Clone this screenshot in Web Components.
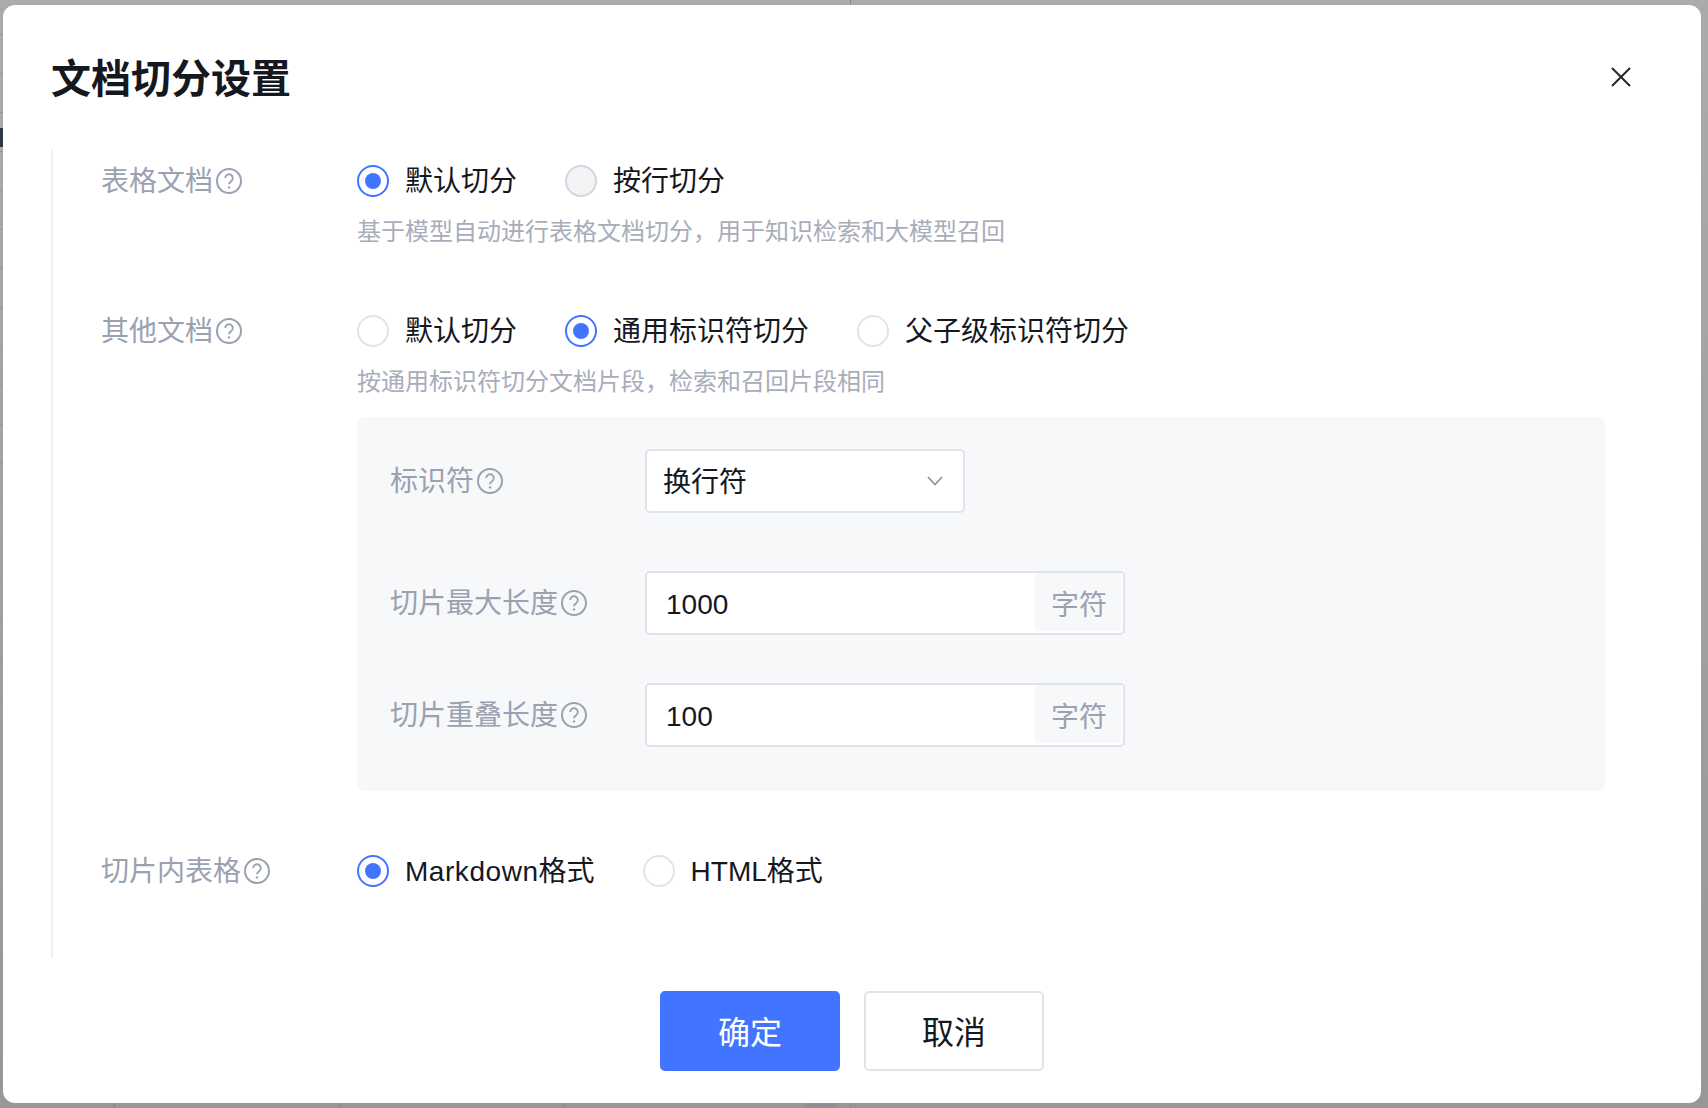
<!DOCTYPE html>
<html lang="zh">
<head>
<meta charset="utf-8">
<title>文档切分设置</title>
<style>
html, body { margin: 0; padding: 0; }
body {
  font-family: "Liberation Sans", "Noto Sans CJK SC", sans-serif;
  color: #15181f;
}
</style>
</head>
<body>
<split-page>
  <split-modal heading="文档切分设置">
    <form-row label="表格文档">
      <radio-group>
        <radio-item checked>默认切分</radio-item>
        <radio-item disabled>按行切分</radio-item>
      </radio-group>
      <form-hint>基于模型自动进行表格文档切分，用于知识检索和大模型召回</form-hint>
    </form-row>
    <form-row label="其他文档" style="margin-top:63px">
      <radio-group>
        <radio-item>默认切分</radio-item>
        <radio-item checked>通用标识符切分</radio-item>
        <radio-item>父子级标识符切分</radio-item>
      </radio-group>
      <form-hint>按通用标识符切分文档片段，检索和召回片段相同</form-hint>
      <sub-panel>
        <form-row label="标识符" compact>
          <select-box value="换行符"></select-box>
        </form-row>
        <form-row label="切片最大长度" compact style="margin-top:58px">
          <addon-input value="1000" addon="字符"></addon-input>
        </form-row>
        <form-row label="切片重叠长度" compact style="margin-top:48px">
          <addon-input value="100" addon="字符"></addon-input>
        </form-row>
      </sub-panel>
    </form-row>
    <form-row label="切片内表格" style="margin-top:60px">
      <radio-group>
        <radio-item checked><span style="letter-spacing:.55px">Markdown</span>格式</radio-item>
        <radio-item>HTML格式</radio-item>
      </radio-group>
    </form-row>
    <action-button slot="footer" primary>确定</action-button>
    <action-button slot="footer">取消</action-button>
  </split-modal>
</split-page>

<script>
class SplitPage extends HTMLElement {
  constructor() {
    super();
    this.attachShadow({mode: 'open'});
    this.shadowRoot.innerHTML = `
<style>
:host {
  display: block;
  width: 1708px;
  height: 1108px;
  box-sizing: border-box;
  padding: 5px 7px 5px 3px;
  overflow: hidden;
  background-color: #a3a3a4;
  background-image:
    linear-gradient(#2f3643, #2f3643),
    repeating-linear-gradient(to bottom, transparent 0 38px, #979799 38px 39px),
    linear-gradient(#8f8f94, #8f8f94),
    linear-gradient(#8a8a8c, #8a8a8c),
    linear-gradient(#8a8a8c, #8a8a8c),
    repeating-linear-gradient(to right, transparent 0 224px, #858587 224px 225px),
    linear-gradient(#ababac, #979797);
  background-size: 3px 19px, 3px 100%, 32px 6px, 1px 6px, 1px 5px, 676px 6px, 100% 100%;
  background-position: 0 128px, 0 -4px, 805px 100%, 850px 100%, 850px 0, -110px 100%, 0 0;
  background-repeat: no-repeat;
}
</style>
<slot></slot>`;
  }
}

class SplitModal extends HTMLElement {
  constructor() {
    super();
    this.attachShadow({mode: 'open'});
    this.shadowRoot.innerHTML = `
<style>
:host {
  display: block;
  height: 1098px;
  box-sizing: border-box;
  background: #fff;
  border-radius: 12px;
  padding: 0 96px 32px 48px;
}
.header {
  display: flex;
  justify-content: space-between;
  align-items: center;
  height: 144px;
  box-sizing: border-box;
  padding: 46px 0 42px;
  margin-right: -26px;
}
.title {
  font-size: 40px;
  line-height: 56px;
  font-weight: 600;
  color: #15181f;
}
.close { display: block; width: 20px; height: 20px; margin-top: -4px; }
.body {
  height: 809px;
  box-sizing: border-box;
  border-left: 2px solid #eef0f4;
  padding: 12px 0 0 48px;
}
.footer {
  display: flex;
  justify-content: center;
  gap: 24px;
  margin: 33px -48px 0 0;
}
</style>
<div class="header">
  <div class="title"></div>
  <svg class="close" viewBox="0 0 20 20" fill="none" stroke="#23262d" stroke-width="2"><path d="M1 1l18 18M19 1L1 19"/></svg>
</div>
<div class="body"><slot></slot></div>
<div class="footer"><slot name="footer"></slot></div>`;
  }

  connectedCallback() {
    this.shadowRoot.querySelector('.title').textContent = this.getAttribute('heading');
  }
}

class HelpIcon extends HTMLElement {
  constructor() {
    super();
    this.attachShadow({mode: 'open'});
    this.shadowRoot.innerHTML = `
<style>
:host { display: block; width: 26px; height: 26px; flex: none; }
svg { display: block; }
</style>
<svg width="26" height="26" viewBox="0 0 26 26" fill="none" stroke="#9aa1b1" stroke-width="2">
  <circle cx="13" cy="13" r="12"/>
  <path d="M9.2 10a3.8 3.8 0 1 1 5.9 3.2c-1.3.9-2.1 1.5-2.1 3.1" stroke-width="1.9"/>
  <circle cx="13" cy="19.4" r="1.2" fill="#9aa1b1" stroke="none"/>
</svg>`;
  }
}

class FormRow extends HTMLElement {
  constructor() {
    super();
    this.attachShadow({mode: 'open'});
    this.shadowRoot.innerHTML = `
<style>
:host { display: flex; align-items: flex-start; }
.label {
  display: flex;
  align-items: center;
  gap: 3px;
  flex: none;
  width: 256px;
  height: 40px;
  font-size: 28px;
  color: #9aa1b1;
}
.label span { line-height: 40px; padding-top: 2px; }
:host([compact]) .label { width: 255px; height: 64px; }
.content { flex: 1; min-width: 0; }
</style>
<div class="label"><span></span><help-icon></help-icon></div>
<div class="content"><slot></slot></div>`;
  }

  connectedCallback() {
    this.shadowRoot.querySelector('.label span').textContent = this.getAttribute('label');
  }
}

class RadioGroup extends HTMLElement {
  constructor() {
    super();
    this.attachShadow({mode: 'open'});
    this.shadowRoot.innerHTML = `
<style>
:host { display: flex; gap: 48px; height: 40px; align-items: center; }
</style>
<slot></slot>`;
  }
}

class RadioItem extends HTMLElement {
  constructor() {
    super();
    this.attachShadow({mode: 'open'});
    this.shadowRoot.innerHTML = `
<style>
:host { display: flex; align-items: center; gap: 16px; font-size: 28px; line-height: 40px; color: #15181f; }
.dot {
  width: 32px;
  height: 32px;
  box-sizing: border-box;
  border: 2px solid #e1e3ea;
  border-radius: 50%;
  background: #fff;
  display: flex;
  align-items: center;
  justify-content: center;
  flex: none;
}
.text { padding-top: 2px; }
:host([checked]) .dot { border-color: #4175ff; }
:host([checked]) .dot::after {
  content: '';
  width: 16px;
  height: 16px;
  border-radius: 50%;
  background: #4175ff;
}
:host([disabled]) .dot { border-color: #d2d5dd; background: #f3f4f6; }
</style>
<span class="dot"></span><span class="text"><slot></slot></span>`;
  }
}

class FormHint extends HTMLElement {
  constructor() {
    super();
    this.attachShadow({mode: 'open'});
    this.shadowRoot.innerHTML = `
<style>
:host { display: block; margin-top: 15px; font-size: 24px; line-height: 32px; color: #a8adba; }
</style>
<slot></slot>`;
  }
}

class SubPanel extends HTMLElement {
  constructor() {
    super();
    this.attachShadow({mode: 'open'});
    this.shadowRoot.innerHTML = `
<style>
:host {
  display: block;
  height: 374px;
  box-sizing: border-box;
  margin-top: 19px;
  padding: 32px 33px 44px;
  background: #f7f8fa;
  border-radius: 8px;
}
</style>
<slot></slot>`;
  }
}

class SelectBox extends HTMLElement {
  constructor() {
    super();
    this.attachShadow({mode: 'open'});
    this.shadowRoot.innerHTML = `
<style>
:host {
  display: flex;
  align-items: center;
  justify-content: space-between;
  width: 320px;
  height: 64px;
  box-sizing: border-box;
  padding: 0 20px 0 16px;
  border: 2px solid #e1e3ea;
  border-radius: 5px;
  background: #fff;
  font-size: 28px;
  color: #15181f;
}
.value { padding-bottom: 2px; }
svg { display: block; }
</style>
<span class="value"></span>
<svg width="16" height="10" viewBox="0 0 16 10" fill="none" stroke="#8d93a1" stroke-width="1.8"><path d="M1 1l7 7.5L15 1"/></svg>`;
  }

  connectedCallback() {
    this.shadowRoot.querySelector('.value').textContent = this.getAttribute('value');
  }
}

class AddonInput extends HTMLElement {
  constructor() {
    super();
    this.attachShadow({mode: 'open'});
    this.shadowRoot.innerHTML = `
<style>
:host {
  display: flex;
  align-items: stretch;
  width: 480px;
  height: 64px;
  box-sizing: border-box;
  padding: 0 2px 2px 0;
  border: 2px solid #e1e3ea;
  border-radius: 5px;
  background: #fff;
  font-size: 28px;
}
.value { flex: 1; padding-left: 19px; line-height: 64px; color: #15181f; }
.addon {
  display: flex;
  align-items: center;
  padding: 2px 14px 0 16px;
  background: #f7f8fa;
  border-radius: 4px;
  color: #9aa1b1;
}
</style>
<span class="value"></span><span class="addon"></span>`;
  }

  connectedCallback() {
    this.shadowRoot.querySelector('.value').textContent = this.getAttribute('value');
    this.shadowRoot.querySelector('.addon').textContent = this.getAttribute('addon');
  }
}

class ActionButton extends HTMLElement {
  constructor() {
    super();
    this.attachShadow({mode: 'open'});
    this.shadowRoot.innerHTML = `
<style>
:host {
  display: flex;
  align-items: center;
  justify-content: center;
  width: 180px;
  height: 80px;
  box-sizing: border-box;
  padding-bottom: 2px;
  border: 2px solid #e1e3ea;
  border-radius: 5px;
  background: #fff;
  font-size: 32px;
  color: #15181f;
}
:host([primary]) { border-color: #4175ff; background: #4175ff; color: #fff; }
</style>
<slot></slot>`;
  }
}

customElements.define('split-page', SplitPage);
customElements.define('split-modal', SplitModal);
customElements.define('help-icon', HelpIcon);
customElements.define('form-row', FormRow);
customElements.define('radio-group', RadioGroup);
customElements.define('radio-item', RadioItem);
customElements.define('form-hint', FormHint);
customElements.define('sub-panel', SubPanel);
customElements.define('select-box', SelectBox);
customElements.define('addon-input', AddonInput);
customElements.define('action-button', ActionButton);
</script>
</body>
</html>
